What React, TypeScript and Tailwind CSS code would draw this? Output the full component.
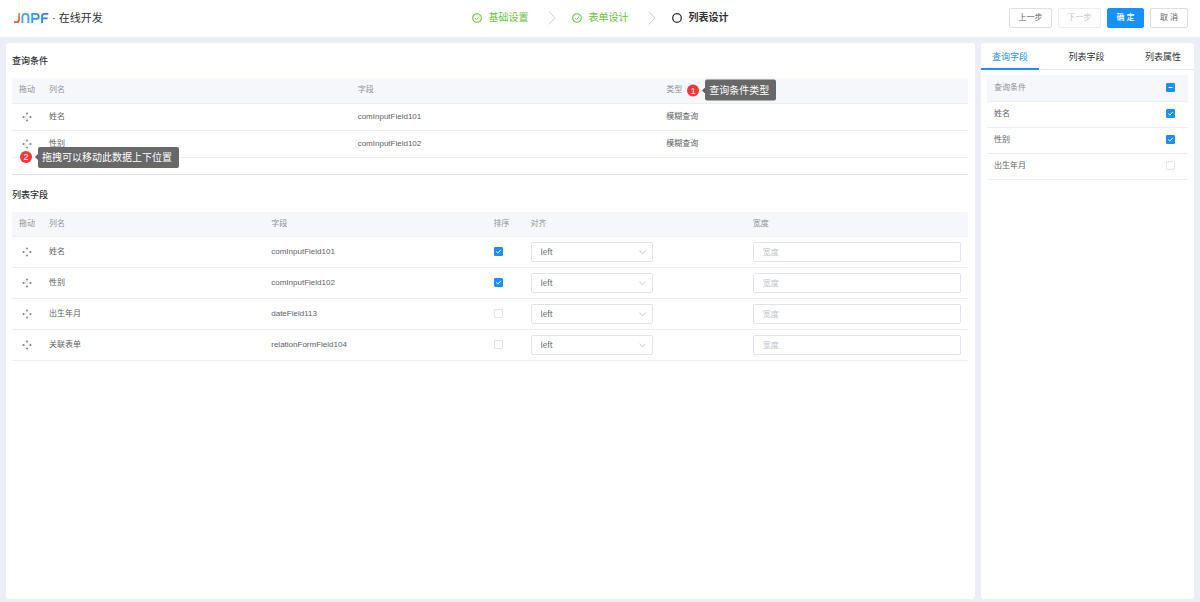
import type { ReactNode } from "react";

const cjk = "font-['Noto_Sans_CJK_SC',sans-serif]";

function Logo() {
  return (
    <svg className="ml-0.5" width="35" height="12" viewBox="0 0 35 12" fill="none" strokeWidth="1.9" role="img" aria-label="JNPF">
      <defs>
        <linearGradient id="warm" x1="0" y1="1" x2="0" y2="11" gradientUnits="userSpaceOnUse">
          <stop offset="0" stopColor="#fb9a3c" />
          <stop offset="1" stopColor="#f4502a" />
        </linearGradient>
        <linearGradient id="cool" x1="8" y1="0" x2="34" y2="0" gradientUnits="userSpaceOnUse">
          <stop offset="0" stopColor="#2fb4f5" />
          <stop offset="1" stopColor="#2f7be6" />
        </linearGradient>
      </defs>
      <path d="M5.1 1V7.2C5.1 9.2 4 10.1 2.3 10.1H0" stroke="url(#warm)" />
      <path d="M8.4 11V4.8C8.4 2.9 9.5 1.9 11.4 1.9S14.4 2.9 14.4 4.8V11" stroke="url(#cool)" />
      <path d="M18.2 11V1.9H22.1C23.9 1.9 24.7 2.9 24.7 4.4S23.9 6.9 22.1 6.9H18.2" stroke="url(#cool)" />
      <path d="M34.3 1.9H30.2C28.8 1.9 28.1 2.7 28.1 4V11M28.1 6.4H33.6" stroke="url(#cool)" />
    </svg>
  );
}

function Step({ label, done }: { label: string; done?: boolean }) {
  return (
    <li className={`flex items-center gap-[7px] text-[10px] leading-4 ${done ? "text-[#67c23a]" : "font-bold text-[#303133]"}`}>
      <svg width="10" height="10" viewBox="0 0 10 10" fill="none" stroke="currentColor">
        <circle cx="5" cy="5" r="4.3" strokeWidth={done ? 1.1 : 1.3} />
        {done && <path d="M3 5.1L4.5 6.6L7.2 3.6" strokeWidth="0.9" />}
      </svg>
      {label}
    </li>
  );
}

function StepArrow() {
  return (
    <li aria-hidden="true" className="pl-[19px] pr-4">
      <svg width="8" height="14" viewBox="0 0 8 14" fill="none" stroke="#c9ccd3" strokeWidth="0.9">
        <path d="M0.6 0.6L7.2 7L0.6 13.4" />
      </svg>
    </li>
  );
}

function DragIcon() {
  return (
    <svg className="mx-auto block" width="10" height="10" viewBox="0 0 10 10" fill="#606266" role="img" aria-label="拖动">
      <path d="M5 0.2L6.3 1.8H3.7ZM5 9.8L6.3 8.2H3.7ZM0.2 5L1.8 3.7V6.3ZM9.8 5L8.2 3.7V6.3Z" />
      <path opacity="0.6" d="M4.6 1.8h.8v1.5h-.8zM4.6 6.7h.8v1.5h-.8zM1.8 4.6h1.5v.8H1.8zM6.7 4.6h1.5v.8H6.7z" />
    </svg>
  );
}

function Check({ label, checked, partial }: { label: string; checked?: boolean; partial?: boolean }) {
  return (
    <span className="inline-grid align-middle">
      <input
        type="checkbox"
        aria-label={label}
        defaultChecked={checked}
        className="col-start-1 row-start-1 size-[9px] appearance-none rounded-[1px] border border-[#e0e3ea] bg-white checked:border-[#1890ff] checked:bg-[#1890ff]"
      />
      {checked && (
        <svg className="pointer-events-none col-start-1 row-start-1" width="9" height="9" viewBox="0 0 9 9" fill="none" stroke="#fff">
          <path d={partial ? "M2.5 4.5H6.5" : "M2.2 4.5L3.8 6.1L6.8 2.9"} />
        </svg>
      )}
    </span>
  );
}

function Hint({ n, children, className }: { n: number; children: ReactNode; className: string }) {
  return (
    <span className={`absolute z-10 flex items-center whitespace-nowrap font-normal ${className}`}>
      <span className="flex size-3 items-center justify-center rounded-full bg-[#fb3437] text-[9px] leading-3 text-white">{n}</span>
      <svg className="ml-[3px]" width="3" height="6" viewBox="0 0 3 6" fill="#606060">
        <path d="M3 0V6L0 3Z" />
      </svg>
      <span role="tooltip" className="rounded-[2px] bg-[#606060]/95 py-[3px] pl-1 pr-[7px] text-[10px] leading-[15px] text-white">
        {children}
      </span>
    </span>
  );
}

function SectionTitle({ children }: { children: ReactNode }) {
  return <h2 className="text-[9px] font-medium leading-[14px] text-[#303133]">{children}</h2>;
}

const th = "px-[7px] py-0 text-left font-normal whitespace-nowrap";
const td = "px-[7px] py-0 whitespace-nowrap";
const headRow = "border-b border-[#ebeef5] bg-[#f5f7fa] text-[#909399]";
const bodyRow = "border-b border-[#ebeef5]";
const table = "w-full table-fixed border-collapse text-[8px] leading-3 text-[#606266]";

const queries = [
  { name: "姓名", field: "comInputField101" },
  { name: "性别", field: "comInputField102" },
];

const columns = [
  { name: "姓名", field: "comInputField101", sort: true },
  { name: "性别", field: "comInputField102", sort: true },
  { name: "出生年月", field: "dateField113", sort: false },
  { name: "关联表单", field: "relationFormField104", sort: false },
];

const options = [
  { name: "姓名", on: true },
  { name: "性别", on: true },
  { name: "出生年月", on: false },
];

function QueryTable() {
  return (
    <table className={table}>
      <colgroup>
        <col className="w-[30px]" />
        <col />
        <col />
        <col />
      </colgroup>
      <thead>
        <tr className={`h-[25px] ${headRow}`}>
          <th className="p-0 text-center font-normal">拖动</th>
          <th className={th}>列名</th>
          <th className={th}>字段</th>
          <th className={th}>
            <span className="relative inline-block">
              类型
              <Hint n={1} className="left-full top-1/2 ml-[5px] -translate-y-1/2">
                查询条件类型
              </Hint>
            </span>
          </th>
        </tr>
      </thead>
      <tbody>
        {queries.map((q, i) => (
          <tr key={q.field} className={`h-[27px] ${bodyRow}`}>
            <td className="p-0">
              <div className="relative">
                <DragIcon />
                {i === 1 && (
                  <Hint n={2} className="left-2 top-full -mt-0.5">
                    拖拽可以移动此数据上下位置
                  </Hint>
                )}
              </div>
            </td>
            <td className={td}>{q.name}</td>
            <td className={td}>{q.field}</td>
            <td className={td}>模糊查询</td>
          </tr>
        ))}
      </tbody>
    </table>
  );
}

function ColumnTable() {
  return (
    <table className={table}>
      <colgroup>
        <col className="w-[30px]" />
        <col />
        <col />
        <col className="w-[37px]" />
        <col />
        <col />
      </colgroup>
      <thead>
        <tr className={`h-[25px] ${headRow}`}>
          <th className="p-0 text-center font-normal">拖动</th>
          <th className={th}>列名</th>
          <th className={th}>字段</th>
          <th className={th}>排序</th>
          <th className={th}>对齐</th>
          <th className={th}>宽度</th>
        </tr>
      </thead>
      <tbody>
        {columns.map((c) => (
          <tr key={c.field} className={`h-[31px] ${bodyRow}`}>
            <td className="p-0">
              <DragIcon />
            </td>
            <td className={td}>{c.name}</td>
            <td className={td}>{c.field}</td>
            <td className={td}>
              <Check label={`${c.name} 排序`} checked={c.sort} />
            </td>
            <td className={td}>
              <span className="grid w-[122px] items-center">
                <select
                  aria-label={`${c.name} 对齐`}
                  defaultValue="left"
                  className={`col-start-1 row-start-1 h-5 w-full appearance-none rounded-[2px] border border-[#e0e3ea] bg-white px-[9px] text-[8px] text-[#606266] ${cjk}`}
                >
                  <option>left</option>
                  <option>center</option>
                  <option>right</option>
                </select>
                <svg className="pointer-events-none col-start-1 row-start-1 mr-[7px] justify-self-end" width="7" height="5" viewBox="0 0 7 5" fill="none" stroke="#c0c4cc" strokeWidth="0.9">
                  <path d="M0.4 0.6L3.5 4L6.6 0.6" />
                </svg>
              </span>
            </td>
            <td className={td}>
              <input
                type="text"
                aria-label={`${c.name} 宽度`}
                placeholder="宽度"
                className="block h-5 w-full rounded-[2px] border border-[#e0e3ea] bg-white px-[9px] text-[8px] placeholder:text-[#c0c4cc]"
              />
            </td>
          </tr>
        ))}
      </tbody>
    </table>
  );
}

function Sidebar() {
  return (
    <aside className="w-[213px] shrink-0 rounded-[3px] bg-white">
      <div role="tablist" className="flex justify-between border-b border-[#e4e7ed] pr-0.5 text-[9px] leading-[14px] text-[#303133]">
        {["查询字段", "列表字段", "列表属性"].map((t, i) => (
          <button
            key={t}
            type="button"
            role="tab"
            aria-selected={i === 0}
            className={`-mb-px h-[27px] w-[58px] border-b-2 pt-[3px] ${i === 0 ? "border-[#1890ff] text-[#1890ff]" : "border-transparent"}`}
          >
            {t}
          </button>
        ))}
      </div>
      <div className="px-1.5 pt-[5px]">
        <table className={table}>
          <colgroup>
            <col />
            <col className="w-9" />
          </colgroup>
          <thead>
            <tr className={`h-[26px] ${headRow}`}>
              <th className={th}>查询条件</th>
              <th className="p-0 text-center">
                <Check label="全选" checked partial />
              </th>
            </tr>
          </thead>
          <tbody>
            {options.map((o) => (
              <tr key={o.name} className={`h-[26px] ${bodyRow}`}>
                <td className={td}>{o.name}</td>
                <td className="p-0 text-center">
                  <Check label={o.name} checked={o.on} />
                </td>
              </tr>
            ))}
          </tbody>
        </table>
      </div>
    </aside>
  );
}

const button = "h-5 rounded-[2px] border text-[8px] leading-3";

export default function App() {
  return (
    <div className="flex min-h-screen flex-col bg-[#ebeef5] font-['Liberation_Sans','Noto_Sans_CJK_SC',sans-serif]">
      <header className="grid h-[37px] grid-cols-[1fr_auto_1fr] items-center bg-white px-3 pb-px">
        <div className="flex items-center gap-[3px] text-[11px] leading-4 text-[#303133]">
          <Logo />
          <span aria-hidden="true">·</span>
          <h1>在线开发</h1>
        </div>
        <ol className="flex items-center">
          <Step label="基础设置" done />
          <StepArrow />
          <Step label="表单设计" done />
          <StepArrow />
          <Step label="列表设计" />
        </ol>
        <div className="flex justify-end gap-1.5">
          <button type="button" className={`w-[43px] border-[#dcdfe6] text-[#606266] ${button}`}>上一步</button>
          <button type="button" disabled className={`w-[43px] border-[#ebeef5] text-[#c0c4cc] ${button}`}>下一步</button>
          <button type="button" className={`w-[37px] border-[#1890ff] bg-[#1890ff] font-medium text-white ${button}`}>确 定</button>
          <button type="button" className={`w-[38px] border-[#dcdfe6] text-[#606266] ${button}`}>取 消</button>
        </div>
      </header>
      <div className="flex flex-1 gap-1.5 px-1.5 pb-[3px] pt-1.5">
        <main className="min-w-0 flex-1 rounded-[3px] bg-white pl-1.5 pr-[7px] pt-[11px]">
          <section className="border-b border-[#e0e3ea] pb-4">
            <SectionTitle>查询条件</SectionTitle>
            <div className="pt-2.5">
              <QueryTable />
            </div>
          </section>
          <section className="pt-[13px]">
            <SectionTitle>列表字段</SectionTitle>
            <div className="pt-2.5">
              <ColumnTable />
            </div>
          </section>
        </main>
        <Sidebar />
      </div>
    </div>
  );
}
